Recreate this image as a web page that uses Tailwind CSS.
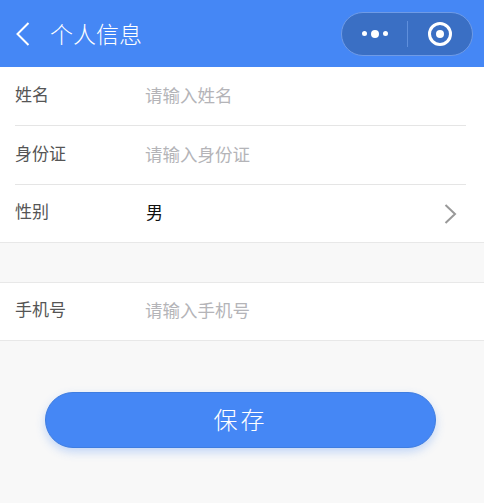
<!DOCTYPE html>
<html lang="zh">
<head>
    <meta charset="UTF-8">
    <title>个人信息</title>
    <script src="https://cdn.jsdelivr.net/npm/@tailwindcss/browser@4"></script>
</head>
<body class="w-[484px] h-[503px] overflow-hidden bg-[#f8f8f8] font-['Noto_Sans_CJK_SC',sans-serif] font-normal">
    <!-- 顶部导航 -->
    <header class="h-[67px] bg-[#4587f5] flex items-center pl-[15px] pr-[11px] text-white">
        <svg class="w-[16px] h-[26px]" viewBox="0 0 16 26" fill="none" stroke="#fff" stroke-width="2"><path d="M13.5 2 L2.5 13 L13.5 24"/></svg>
        <span class="ml-[19px] text-[23px] leading-none font-light">个人信息</span>
        <div class="ml-auto w-[132px] h-[44px] rounded-full bg-[#3a6fc4] border border-[#6f9be6] flex items-center">
            <div class="w-[65px] flex items-center justify-center gap-[4px]">
                <i class="w-[5px] h-[5px] rounded-full bg-white"></i>
                <i class="w-[8px] h-[8px] rounded-full bg-white"></i>
                <i class="w-[5px] h-[5px] rounded-full bg-white"></i>
            </div>
            <div class="w-px h-[26px] bg-[#5f8fdc]"></div>
            <div class="flex-1 flex items-center justify-center">
                <div class="w-[24px] h-[24px] rounded-full border-[3px] border-white flex items-center justify-center">
                    <i class="w-[8px] h-[8px] rounded-full bg-white"></i>
                </div>
            </div>
        </div>
    </header>

    <!-- 第一组 -->
    <section class="bg-white border-b border-[#e8e8e8] pl-[15px]">
        <div class="h-[59px] flex items-center border-b border-[#e5e5e5] mr-[18px]">
            <span class="w-[131px] text-[17px] text-[#555] -mt-[5px]">姓名</span>
            <span class="text-[17.5px] text-[#b4b4b8] -mt-[2px] -ml-px">请输入姓名</span>
        </div>
        <div class="h-[59px] flex items-center border-b border-[#e5e5e5] mr-[18px]">
            <span class="w-[131px] text-[17px] text-[#555] -mt-[5px]">身份证</span>
            <span class="text-[17.5px] text-[#b4b4b8] -mt-[2px] -ml-px">请输入身份证</span>
        </div>
        <div class="h-[57px] flex items-center mr-[18px]">
            <span class="w-[131px] text-[17px] text-[#555] -mt-[6px]">性别</span>
            <span class="text-[17px] text-[#111] -mt-[4px]">男</span>
            <svg class="ml-auto mr-[8px] w-[14px] h-[22px]" viewBox="0 0 14 22" fill="none" stroke="#999" stroke-width="2"><path d="M1.5 2 L11 11 L1.5 20"/></svg>
        </div>
    </section>

    <!-- 第二组 -->
    <section class="mt-[39px] bg-white border-y border-[#e8e8e8] pl-[15px]">
        <div class="h-[57px] flex items-center">
            <span class="w-[131px] text-[17px] text-[#555] -mt-[5px]">手机号</span>
            <span class="text-[17.5px] text-[#b4b4b8] -mt-[2px] -ml-px">请输入手机号</span>
        </div>
    </section>

    <div class="px-[45px] mt-[51px] w-[481px]">
        <button class="w-full h-[56px] pb-[3px] rounded-[28px] bg-[#4587f5] border border-[#3f7de0] text-white text-[24px] font-light tracking-[3px] shadow-[0_4px_10px_rgba(69,135,245,0.3)]">保存</button>
    </div>
</body>
</html>
